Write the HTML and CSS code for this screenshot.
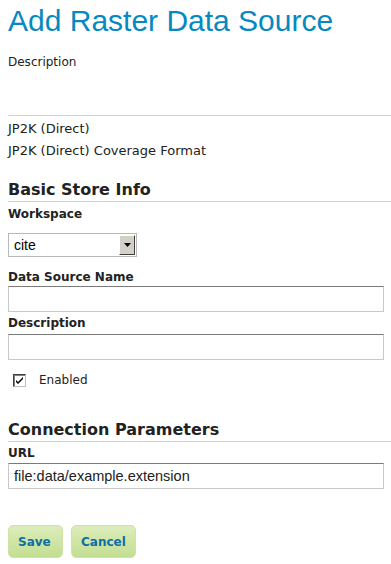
FILE: index.html
```html
<!DOCTYPE html>
<html lang="en">
<head>
    <meta charset="UTF-8">
    <meta name="viewport" content="width=device-width, initial-scale=1.0">
    <title>Add Raster Data Source</title>
    <link rel="stylesheet" href="styles.css">
</head>
<body>
    <div class="page">
        <h1 class="title">Add Raster Data Source</h1>
        <p class="intro">Description</p>

        <div class="format">
            <p>JP2K (Direct)</p>
            <p>JP2K (Direct) Coverage Format</p>
        </div>

        <h2 class="section first">Basic Store Info</h2>
        <label class="label workspace">Workspace</label>
        <div class="select">
            <span class="select-value">cite</span>
            <span class="select-button">
                <svg width="7" height="4" viewBox="0 0 7 4"><path d="M0 0h7L3.5 4z" fill="#000"/></svg>
            </span>
        </div>

        <label class="label name">Data Source Name</label>
        <input class="text" type="text">

        <label class="label desc">Description</label>
        <input class="text" type="text">

        <div class="check-row">
            <span class="checkbox">
                <svg width="9" height="9" viewBox="0 0 9 9"><path d="M1 4l2 2 5-5v2L3 8 1 6z" fill="#000"/></svg>
            </span>
            <span>Enabled</span>
        </div>

        <h2 class="section second">Connection Parameters</h2>
        <label class="label url">URL</label>
        <input class="text" type="text" value="file:data/example.extension">

        <div class="actions">
            <button class="btn save">Save</button>
            <button class="btn cancel">Cancel</button>
        </div>
    </div>
</body>
</html>
```

FILE: styles.css
```css
body {
    margin: 0;
    padding: 0;
    background-color: white;
    color: #222;
    font-family: "DejaVu Sans", Verdana, sans-serif;
}
.page {
    padding-left: 8px;
}
.title {
    margin: 3px 0 0;
    font-family: "Liberation Sans", Arial, sans-serif;
    font-weight: normal;
    font-size: 30px;
    line-height: 36px;
    color: #0589c0;
}
.intro {
    margin: 15px 0 0;
    font-size: 12px;
    line-height: 16px;
}
.format {
    margin-top: 45px;
    padding-top: 2px;
    border-top: 1px solid #c9dda5;
}
.format p {
    margin: 0;
    font-size: 13px;
    line-height: 22px;
}
.section {
    margin: 0;
    padding-bottom: 1px;
    border-bottom: 1px solid #c9dda5;
    font-size: 16px;
    line-height: 20px;
    color: #222;
}
.section.first {
    margin-top: 18px;
}
.section.second {
    margin-top: 32px;
}
.label {
    display: block;
    font-size: 12px;
    font-weight: bold;
    line-height: 14px;
}
.label.workspace {
    margin-top: 5px;
}
.label.name {
    margin-top: 13px;
    margin-bottom: 2px;
}
.label.desc {
    margin-top: 4px;
    margin-bottom: 4px;
}
.label.url {
    margin-top: 4px;
    margin-bottom: 3px;
}
.select {
    display: flex;
    width: 129px;
    height: 24px;
    margin-top: 12px;
    box-sizing: border-box;
    border: 1px solid #b8b8b8;
    background-color: white;
}
.select-value {
    flex: 1;
    padding-left: 5px;
    font-family: "Liberation Sans", Arial, sans-serif;
    font-size: 14px;
    line-height: 22px;
    color: #000;
}
.select-button {
    display: flex;
    align-items: center;
    justify-content: center;
    width: 16px;
    margin: 1px;
    box-sizing: border-box;
    background-color: #d4d0c8;
    border: 1px solid;
    border-color: #fff #404040 #404040 #fff;
}
.text {
    display: block;
    width: 376px;
    height: 26px;
    margin: 0;
    padding: 0 5px;
    box-sizing: border-box;
    border: 1px solid #c8c8c8;
    border-top-color: #7b7b7b;
    font-family: "Liberation Sans", Arial, sans-serif;
    font-size: 14.5px;
    color: #222;
}
.check-row {
    display: flex;
    align-items: center;
    gap: 13px;
    margin-top: 12px;
    padding-left: 5px;
    font-size: 12px;
    line-height: 16px;
}
.checkbox {
    display: flex;
    align-items: center;
    justify-content: center;
    width: 13px;
    height: 13px;
    box-sizing: border-box;
    border: 1px solid;
    border-color: #404040 #c0c0c0 #c0c0c0 #404040;
    box-shadow: inset 1px 1px 0 #808080;
    background-color: white;
}
.actions {
    display: flex;
    gap: 8px;
    margin-top: 36px;
}
.btn {
    height: 33px;
    padding: 0 12px 0 9px;
    border: 1px solid #cfe3a9;
    border-radius: 5px;
    background: linear-gradient(#dcedbb, #c3de92);
    color: #0f6ea3;
    font-family: "DejaVu Sans", Verdana, sans-serif;
    font-size: 12px;
    font-weight: bold;
    text-align: left;
    cursor: pointer;
}
.btn.save {
    width: 55px;
}
.btn.cancel {
    width: 65px;
}
```
